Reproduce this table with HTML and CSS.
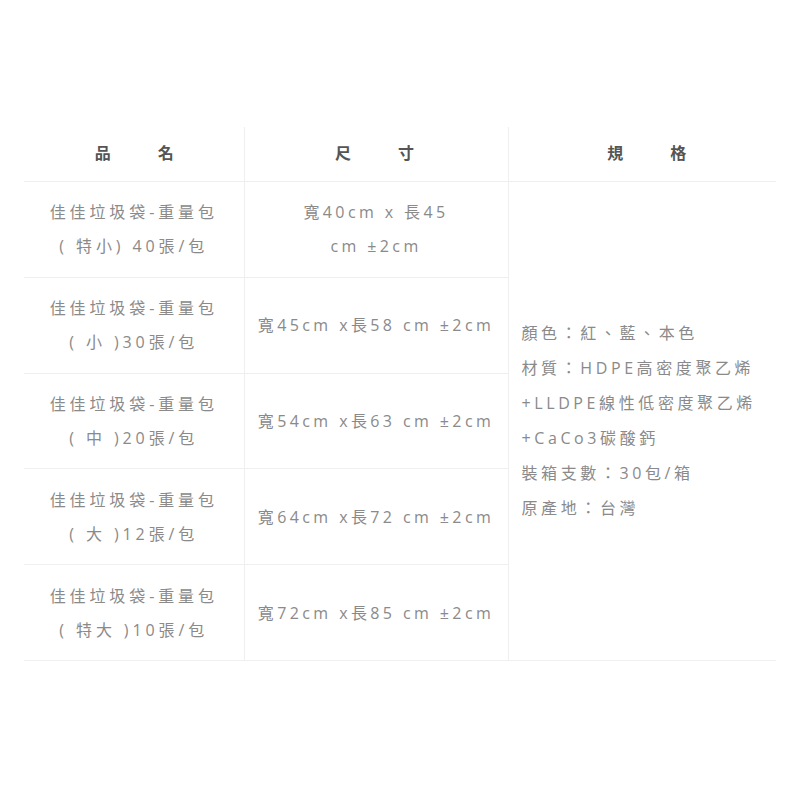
FILE: index.html
```html
<!DOCTYPE html>
<html lang="zh-Hant">
<head>
<meta charset="utf-8">
<title>佳佳垃圾袋-重量包 規格</title>
<link rel="stylesheet" href="styles.css">
</head>
<body>
<div class="wrap">
<table class="spec">
  <colgroup>
    <col class="c1">
    <col class="c2">
    <col class="c3">
  </colgroup>
  <thead>
    <tr>
      <th class="th1">品 名</th>
      <th class="th2">尺 寸</th>
      <th class="th3">規 格</th>
    </tr>
  </thead>
  <tbody>
    <tr>
      <td class="name">佳佳垃圾袋-重量包<br>( 特小) 40張/包</td>
      <td class="size">寬40cm x 長45 cm&nbsp;±2cm</td>
      <td class="info" rowspan="5">顏色：紅、藍、本色<br>材質：HDPE高密度聚乙烯<br>+LLDPE線性低密度聚乙烯<br>+CaCo3碳酸鈣<br>裝箱支數：30包/箱<br>原產地：台灣</td>
    </tr>
    <tr>
      <td class="name">佳佳垃圾袋-重量包<br>( 小 )30張/包</td>
      <td class="size">寬45cm x長58 cm&nbsp;±2cm</td>
    </tr>
    <tr>
      <td class="name">佳佳垃圾袋-重量包<br>( 中 )20張/包</td>
      <td class="size">寬54cm x長63 cm&nbsp;±2cm</td>
    </tr>
    <tr>
      <td class="name">佳佳垃圾袋-重量包<br>( 大 )12張/包</td>
      <td class="size">寬64cm x長72 cm&nbsp;±2cm</td>
    </tr>
    <tr>
      <td class="name">佳佳垃圾袋-重量包<br>( 特大 )10張/包</td>
      <td class="size">寬72cm x長85 cm&nbsp;±2cm</td>
    </tr>
  </tbody>
</table>
</div>
</body>
</html>
```

FILE: styles.css
```css
html, body {
  margin: 0;
  padding: 0;
  background: #ffffff;
}

body {
  font-family: "Open Sans", "Noto Sans CJK TC", sans-serif;
  color: #8a8a8a;
}

.wrap {
  padding: 127px 24px 0 24px;
}

.spec {
  width: 752px;
  border-collapse: collapse;
  table-layout: fixed;
  font-size: 16px;
  letter-spacing: 3.4px;
}

.c1 { width: 220px; }
.c2 { width: 264px; }
.c3 { width: 268px; }

.spec th {
  height: 49px;
  padding: 0 10px 5px 10px;
  font-weight: 600;
  letter-spacing: 3px;
  color: #555555;
  text-align: center;
  vertical-align: middle;
  word-spacing: 37px;
  border-bottom: 1px solid #efefef;
  border-left: 1px solid #efefef;
}

.spec th:first-child {
  border-left: none;
}

.spec th.th1 {
  padding-left: 14px;
}

.spec th.th3 {
  padding-left: 22px;
}

.spec td {
  padding: 13.4px 10px;
  line-height: 34px;
  text-align: center;
  vertical-align: middle;
  border-bottom: 1px solid #efefef;
  border-left: 1px solid #efefef;
}

.spec tr td:first-child {
  border-left: none;
}

.spec td.name {
  letter-spacing: 3.9px;
}

.spec td.size {
  padding-left: 13px;
  padding-right: 13px;
}

.spec td.info {
  text-align: left;
  padding: 0 10px 0 13px;
  line-height: 35px;
  letter-spacing: 3.6px;
}
```
